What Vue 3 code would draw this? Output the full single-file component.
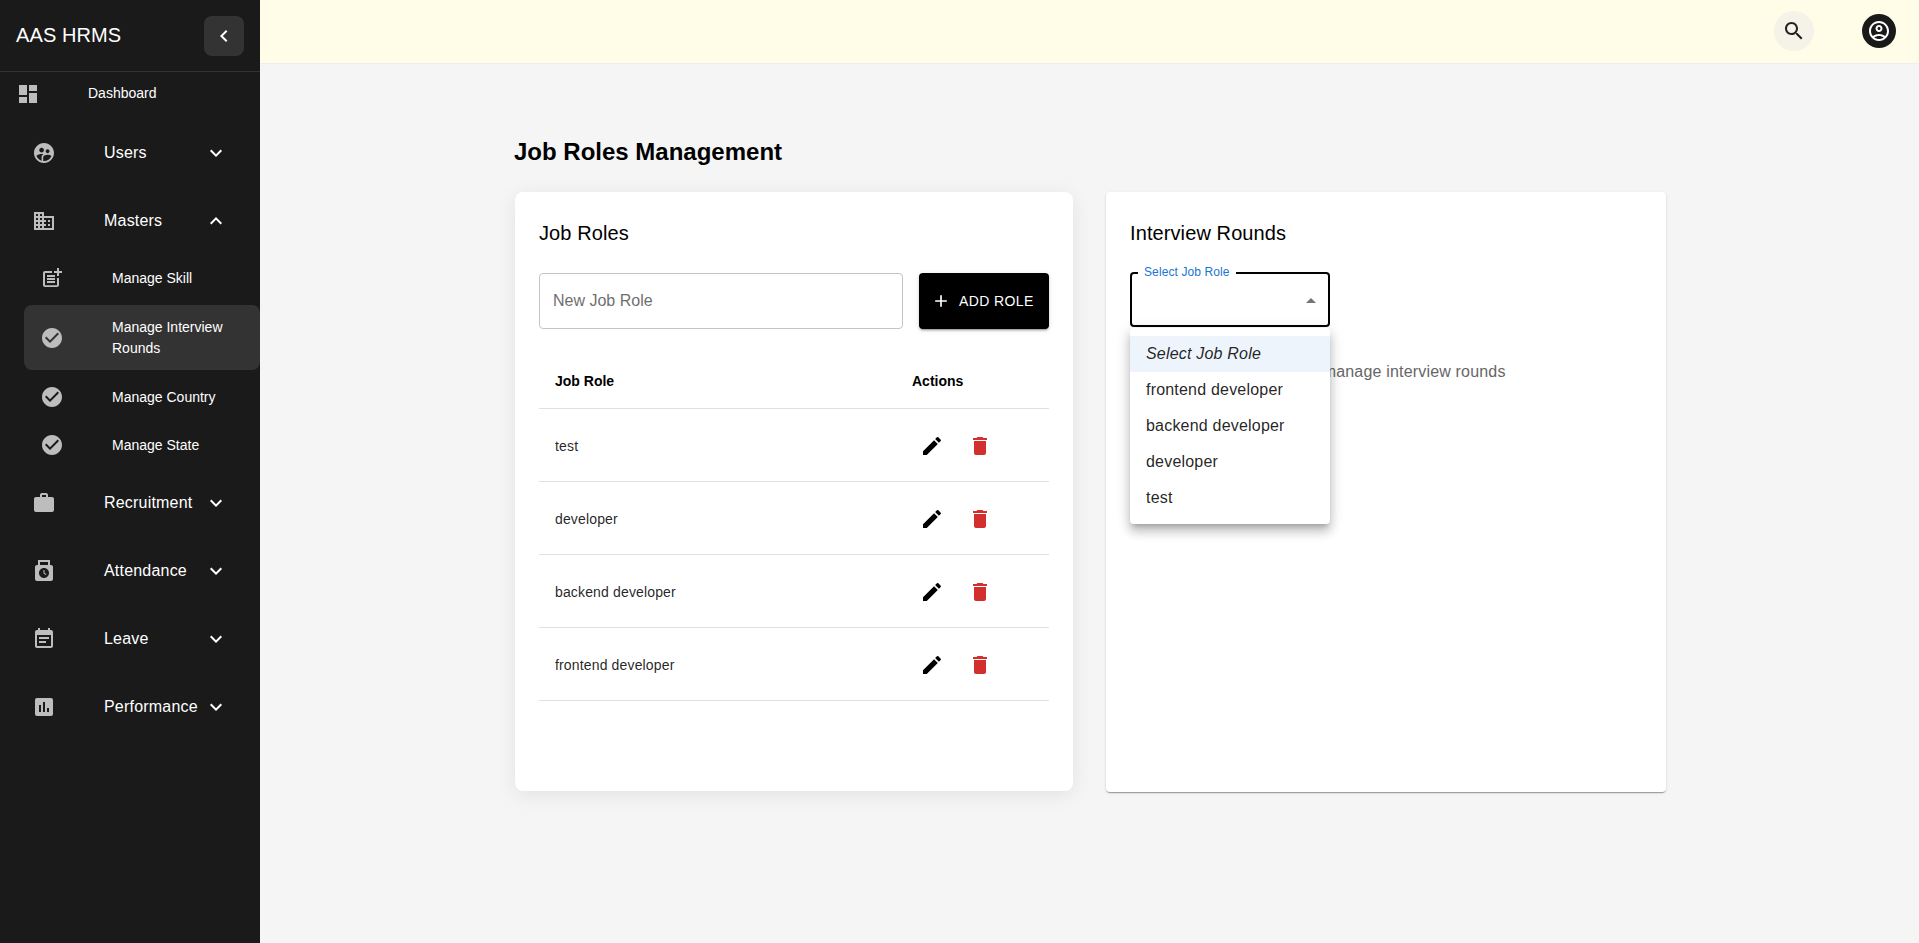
<template>
  <div class="layout">
    <aside class="sidebar">
      <div class="brand">
        <span class="brand-name">AAS HRMS</span>
        <button class="collapse-btn" type="button">
          <svg viewBox="0 0 24 24" width="24" height="24"><path fill="#fff" d="M15.41 7.41 14 6l-6 6 6 6 1.41-1.41L10.83 12z" /></svg>
        </button>
      </div>

      <div class="nav-dash">
        <svg class="nav-icon" viewBox="0 0 24 24" width="24" height="24"><path :d="icons.dashboard" /></svg>
        <span>Dashboard</span>
      </div>

      <template v-for="item in navItems" :key="item.label">
        <div class="nav-item">
          <svg class="nav-icon" viewBox="0 0 24 24" width="24" height="24">
            <path v-for="d in item.paths" :key="d" :d="d" />
          </svg>
          <span class="nav-label">{{ item.label }}</span>
          <svg class="chevron" viewBox="0 0 24 24" width="24" height="24">
            <path :d="item.children ? icons.less : icons.more" />
          </svg>
        </div>
        <div v-if="item.children" class="sub-list">
          <div
            v-for="sub in item.children"
            :key="sub.label"
            class="sub-item"
            :class="{ active: sub.active }"
          >
            <svg class="nav-icon" viewBox="0 0 24 24" width="24" height="24"><path :d="sub.icon" /></svg>
            <span class="sub-label">{{ sub.label }}</span>
          </div>
        </div>
      </template>
    </aside>

    <div class="content">
      <header class="topbar">
        <button class="search-btn" type="button">
          <svg viewBox="0 0 24 24" width="24" height="24"><path :d="icons.search" /></svg>
        </button>
        <div class="avatar">
          <svg viewBox="0 0 24 24" width="24" height="24">
            <path :d="icons.accountA" />
            <path :d="icons.accountB" />
          </svg>
        </div>
      </header>

      <main class="page">
        <h1 class="page-title">Job Roles Management</h1>
        <div class="cards">
          <section class="card roles-card">
            <h2 class="card-title">Job Roles</h2>
            <div class="add-row">
              <div class="text-field">New Job Role</div>
              <button class="add-btn" type="button">
                <svg viewBox="0 0 24 24" width="20" height="20"><path fill="#fff" d="M19 13h-6v6h-2v-6H5v-2h6V5h2v6h6v2z" /></svg>
                <span>Add Role</span>
              </button>
            </div>
            <div class="table-row table-head">
              <div class="col-name">Job Role</div>
              <div>Actions</div>
            </div>
            <div v-for="role in roles" :key="role" class="table-row">
              <div class="col-name">{{ role }}</div>
              <div class="actions">
                <span class="icon-btn">
                  <svg viewBox="0 0 24 24" width="24" height="24"><path :d="icons.edit" /></svg>
                </span>
                <span class="icon-btn">
                  <svg viewBox="0 0 24 24" width="24" height="24"><path fill="#d32f2f" :d="icons.trash" /></svg>
                </span>
              </div>
            </div>
          </section>

          <section class="card rounds-card">
            <h2 class="card-title">Interview Rounds</h2>
            <div class="select-wrap">
              <div class="select-box">
                <span class="select-label">Select Job Role</span>
                <span class="select-arrow" />
              </div>
              <ul class="menu">
                <li class="menu-item placeholder">Select Job Role</li>
                <li v-for="opt in options" :key="opt" class="menu-item">{{ opt }}</li>
              </ul>
            </div>
            <p class="hint">Please select a job role to manage interview rounds</p>
          </section>
        </div>
      </main>
    </div>
  </div>
</template>

<script setup>
const icons = {
  dashboard: "M3 13h8V3H3v10zm0 8h8v-6H3v6zm10 0h8V11h-8v10zm0-18v6h8V3h-8z",
  more: "M16.59 8.59 12 13.17 7.41 8.59 6 10l6 6 6-6z",
  less: "m12 8-6 6 1.41 1.41L12 10.83l4.59 4.58L18 14z",
  search:
    "M15.5 14h-.79l-.28-.27C15.41 12.59 16 11.11 16 9.5 16 5.91 13.09 3 9.5 3S3 5.91 3 9.5 5.91 16 9.5 16c1.61 0 3.09-.59 4.23-1.57l.27.28v.79l5 4.99L20.49 19l-4.99-5zm-6 0C7.01 14 5 11.99 5 9.5S7.01 5 9.5 5 14 7.01 14 9.5 11.99 14 9.5 14z",
  accountA:
    "M12 2C6.48 2 2 6.48 2 12s4.48 10 10 10 10-4.48 10-10S17.52 2 12 2zM7.35 18.5C8.66 17.56 10.26 17 12 17s3.34.56 4.65 1.5c-1.31.94-2.91 1.5-4.65 1.5s-3.34-.56-4.65-1.5zm10.79-1.38C16.45 15.8 14.32 15 12 15s-4.45.8-6.14 2.12C4.7 15.73 4 13.95 4 12c0-4.42 3.58-8 8-8s8 3.58 8 8c0 1.95-.7 3.73-1.86 5.12z",
  accountB:
    "M12 6c-1.93 0-3.5 1.57-3.5 3.5S10.07 13 12 13s3.5-1.57 3.5-3.5S13.93 6 12 6zm0 5c-.83 0-1.5-.67-1.5-1.5S11.17 8 12 8s1.5.67 1.5 1.5S12.83 11 12 11z",
  edit: "M3 17.25V21h3.75L17.81 9.94l-3.75-3.75L3 17.25zM20.71 7.04c.39-.39.39-1.02 0-1.41l-2.34-2.34a.9959.9959 0 0 0-1.41 0l-1.83 1.83 3.75 3.75 1.83-1.83z",
  trash: "M6 19c0 1.1.9 2 2 2h8c1.1 0 2-.9 2-2V7H6v12zM19 4h-3.5l-1-1h-5l-1 1H5v2h14V4z",
};

const check =
  "M12 2C6.48 2 2 6.48 2 12s4.48 10 10 10 10-4.48 10-10S17.52 2 12 2zm-2 15l-5-5 1.41-1.41L10 14.17l7.59-7.59L19 8l-9 9z";

const navItems = [
  {
    label: "Users",
    paths: [
      "M11.99 2c-5.52 0-10 4.48-10 10s4.48 10 10 10 10-4.48 10-10-4.48-10-10-10zm3.61 6.34c1.07 0 1.93.86 1.93 1.93 0 1.07-.86 1.93-1.93 1.93-1.07 0-1.93-.86-1.93-1.93-.01-1.07.86-1.93 1.93-1.93zm-6-1.58c1.3 0 2.36 1.06 2.36 2.36 0 1.3-1.06 2.36-2.36 2.36s-2.36-1.06-2.36-2.36c0-1.31 1.05-2.36 2.36-2.36zm0 9.13v3.75c-2.4-.75-4.3-2.6-5.14-4.96 1.05-1.12 3.67-1.69 5.14-1.69.53 0 1.2.08 1.9.22-1.64.87-1.9 2.02-1.9 2.68zM11.99 20c-.27 0-.53-.01-.79-.04v-4.07c0-1.42 2.94-2.13 4.4-2.13 1.07 0 2.92.39 3.84 1.15-1.17 2.97-4.06 5.09-7.45 5.09z",
    ],
  },
  {
    label: "Masters",
    paths: [
      "M12 7V3H2v18h20V7H12zM6 19H4v-2h2v2zm0-4H4v-2h2v2zm0-4H4V9h2v2zm0-4H4V5h2v2zm4 12H8v-2h2v2zm0-4H8v-2h2v2zm0-4H8V9h2v2zm0-4H8V5h2v2zm10 12h-8v-2h2v-2h-2v-2h2v-2h-2V9h8v10zm-2-8h-2v2h2v-2zm0 4h-2v2h2v-2z",
    ],
    children: [
      {
        label: "Manage Skill",
        icon: "M17 19.22H5V7h7V5H5c-1.1 0-2 .9-2 2v12c0 1.1.9 2 2 2h12c1.1 0 2-.9 2-2v-7h-2v7.22zM19 2h-2v3h-3c.01.01 0 2 0 2h3v2.99c.01.01 2 0 2 0V7h3V5h-3V2zM7 9h8v2H7zM7 12v2h8v-2h-3zM7 15h8v2H7z",
      },
      { label: "Manage Interview Rounds", icon: check, active: true },
      { label: "Manage Country", icon: check },
      { label: "Manage State", icon: check },
    ],
  },
  {
    label: "Recruitment",
    paths: [
      "M20 6h-4V4c0-1.11-.89-2-2-2h-4c-1.11 0-2 .89-2 2v2H4c-1.11 0-1.99.89-1.99 2L2 19c0 1.11.89 2 2 2h16c1.11 0 2-.89 2-2V8c0-1.11-.89-2-2-2zm-6 0h-4V4h4v2z",
    ],
  },
  {
    label: "Attendance",
    paths: [
      "M19 6h-1V1H6v5H5c-1.1 0-2 .9-2 2v12c0 1.1.9 2 2 2h14c1.1 0 2-.9 2-2V8c0-1.1-.9-2-2-2zM8 3h8v3H8V3zm4 16c-2.76 0-5-2.24-5-5s2.24-5 5-5 5 2.24 5 5-2.24 5-5 5z",
      "M12.5 11h-1v3.5l2.5 1.5.5-.8-2-1.2z",
    ],
  },
  {
    label: "Leave",
    paths: [
      "M17 10H7v2h10v-2zm2-7h-1V1h-2v2H8V1H6v2H5c-1.11 0-1.99.9-1.99 2L3 19c0 1.1.89 2 2 2h14c1.1 0 2-.9 2-2V5c0-1.1-.9-2-2-2zm0 16H5V8h14v11zm-5-5H7v2h7v-2z",
    ],
  },
  {
    label: "Performance",
    paths: [
      "M19 3H5c-1.1 0-2 .9-2 2v14c0 1.1.9 2 2 2h14c1.1 0 2-.9 2-2V5c0-1.1-.9-2-2-2zM9 17H7v-7h2v7zm4 0h-2V7h2v10zm4 0h-2v-4h2v4z",
    ],
  },
];

const roles = ["test", "developer", "backend developer", "frontend developer"];
const options = ["frontend developer", "backend developer", "developer", "test"];
</script>

<style>
html,
body {
  margin: 0;
  height: 100%;
  overflow: hidden;
}
</style>

<style scoped>
.layout {
  display: flex;
  height: 943px;
  font-family: "Liberation Sans", Arial, sans-serif;
  color: #000;
  background: #f5f5f5;
}

.sidebar {
  width: 260px;
  flex-shrink: 0;
  background: #1a1a1a;
  color: #fff;
}
.brand {
  display: flex;
  align-items: center;
  justify-content: space-between;
  height: 71px;
  padding: 0 16px;
  border-bottom: 1px solid #333;
}
.brand-name {
  font-size: 20px;
  letter-spacing: 0.1px;
}
.collapse-btn {
  display: flex;
  align-items: center;
  justify-content: center;
  width: 40px;
  height: 40px;
  padding: 0;
  border: none;
  border-radius: 8px;
  background: #333;
}
.nav-icon {
  flex-shrink: 0;
  fill: #bdbdbd;
}
.nav-dash {
  display: flex;
  align-items: center;
  height: 44px;
  margin-bottom: 3px;
  padding-left: 16px;
  font-size: 14px;
}
.nav-dash span {
  margin: -2px 0 0 48px;
}
.nav-item {
  display: flex;
  align-items: center;
  height: 68px;
  padding-left: 32px;
  font-size: 16px;
}
.nav-label {
  flex: 1;
  margin-left: 48px;
  letter-spacing: 0.2px;
}
.chevron {
  margin-right: 32px;
  fill: #fff;
}
.sub-list {
  margin-top: -1px;
  padding-left: 24px;
}
.sub-item {
  display: flex;
  align-items: center;
  min-height: 48px;
  padding-left: 16px;
  font-size: 14px;
  line-height: 21px;
  border-radius: 8px;
}
.sub-item.active {
  min-height: 65px;
  margin: 3px 0;
  background: #333;
}
.sub-label {
  margin-left: 48px;
  width: 125px;
}

.content {
  flex: 1;
  min-width: 0;
}
.topbar {
  display: flex;
  align-items: center;
  justify-content: flex-end;
  box-sizing: border-box;
  height: 64px;
  padding: 0 23px 1px 0;
  background: #fffde7;
  border-bottom: 1px solid #eeeeee;
}
.search-btn {
  display: flex;
  align-items: center;
  justify-content: center;
  width: 40px;
  height: 40px;
  padding: 0;
  border: none;
  border-radius: 50%;
  background: #f5f3e8;
}
.search-btn svg {
  fill: #212121;
}
.avatar {
  display: flex;
  align-items: center;
  justify-content: center;
  width: 34px;
  height: 34px;
  margin-left: 48px;
  border-radius: 50%;
  background: #1a1a1a;
}
.avatar svg {
  fill: #fff;
}

.page {
  padding: 74px 0 0 255px;
}
.page-title {
  margin: 0 0 26px -1px;
  font-size: 24px;
  line-height: 28px;
  font-weight: 700;
}
.cards {
  display: grid;
  grid-template-columns: 558px 560px;
  column-gap: 33px;
  align-items: start;
}
.card {
  box-sizing: border-box;
  padding: 25px 24px 24px;
  background: #fff;
  border-radius: 8px;
  box-shadow: 0 4px 20px rgba(0, 0, 0, 0.08);
}
.roles-card {
  height: 599px;
}
.rounds-card {
  height: 600px;
  border-radius: 4px;
  box-shadow: 0 2px 1px -1px rgba(0, 0, 0, 0.2), 0 1px 1px rgba(0, 0, 0, 0.14), 0 1px 3px rgba(0, 0, 0, 0.12);
}
.card-title {
  margin: 0 0 24px;
  font-size: 20px;
  line-height: 32px;
  font-weight: 400;
  letter-spacing: 0.1px;
}
.rounds-card .card-title {
  margin-bottom: 23px;
}

.add-row {
  display: flex;
  gap: 16px;
  margin-bottom: 24px;
}
.text-field {
  flex: 1;
  display: flex;
  align-items: center;
  box-sizing: border-box;
  height: 56px;
  padding: 0 13px;
  font-size: 16px;
  color: #6f6f6f;
  border: 1px solid #c4c4c4;
  border-radius: 4px;
}
.add-btn {
  display: flex;
  align-items: center;
  gap: 8px;
  width: 130px;
  height: 56px;
  padding: 0 0 0 12px;
  border: none;
  border-radius: 4px;
  background: #000;
  color: #fff;
  font-family: inherit;
  font-size: 14px;
  letter-spacing: 0.4px;
  text-transform: uppercase;
  box-shadow: 0 3px 1px -2px rgba(0, 0, 0, 0.2), 0 2px 2px rgba(0, 0, 0, 0.14), 0 1px 5px rgba(0, 0, 0, 0.12);
}

.table-row {
  display: flex;
  align-items: center;
  box-sizing: border-box;
  height: 73px;
  padding-top: 1px;
  font-size: 14px;
  letter-spacing: 0.15px;
  color: rgba(0, 0, 0, 0.87);
  border-bottom: 1px solid #e0e0e0;
}
.table-head {
  height: 56px;
  color: #000;
  font-weight: 700;
  letter-spacing: 0;
}
.col-name {
  box-sizing: border-box;
  width: 373px;
  padding-left: 16px;
}
.actions {
  display: flex;
  gap: 8px;
}
.icon-btn {
  display: flex;
  align-items: center;
  justify-content: center;
  width: 40px;
  height: 40px;
}

.select-wrap {
  position: relative;
  width: 200px;
}
.select-box {
  position: relative;
  box-sizing: border-box;
  height: 55px;
  border: 2px solid #000;
  border-radius: 4px;
}
.select-label {
  position: absolute;
  top: -9px;
  left: 6px;
  padding: 0 6px;
  background: #fff;
  font-size: 12px;
  line-height: 14px;
  letter-spacing: 0.1px;
  color: #1976d2;
}
.select-arrow {
  position: absolute;
  top: 24px;
  right: 12px;
  border-left: 5px solid transparent;
  border-right: 5px solid transparent;
  border-bottom: 5px solid #757575;
}
.menu {
  position: absolute;
  top: 56px;
  left: 0;
  z-index: 2;
  width: 200px;
  margin: 0;
  padding: 8px 0;
  list-style: none;
  background: #fff;
  border-radius: 4px;
  box-shadow: 0 5px 5px -3px rgba(0, 0, 0, 0.2), 0 8px 10px 1px rgba(0, 0, 0, 0.14), 0 3px 14px 2px rgba(0, 0, 0, 0.12);
}
.menu-item {
  box-sizing: border-box;
  height: 36px;
  padding: 0 16px;
  font-size: 16px;
  line-height: 36px;
  letter-spacing: 0.2px;
  color: rgba(0, 0, 0, 0.87);
}
.placeholder {
  font-style: italic;
  background: #edf4fb;
}
.hint {
  margin: 33px 0 0;
  font-size: 16px;
  line-height: 24px;
  letter-spacing: 0.18px;
  color: #666;
}
</style>
